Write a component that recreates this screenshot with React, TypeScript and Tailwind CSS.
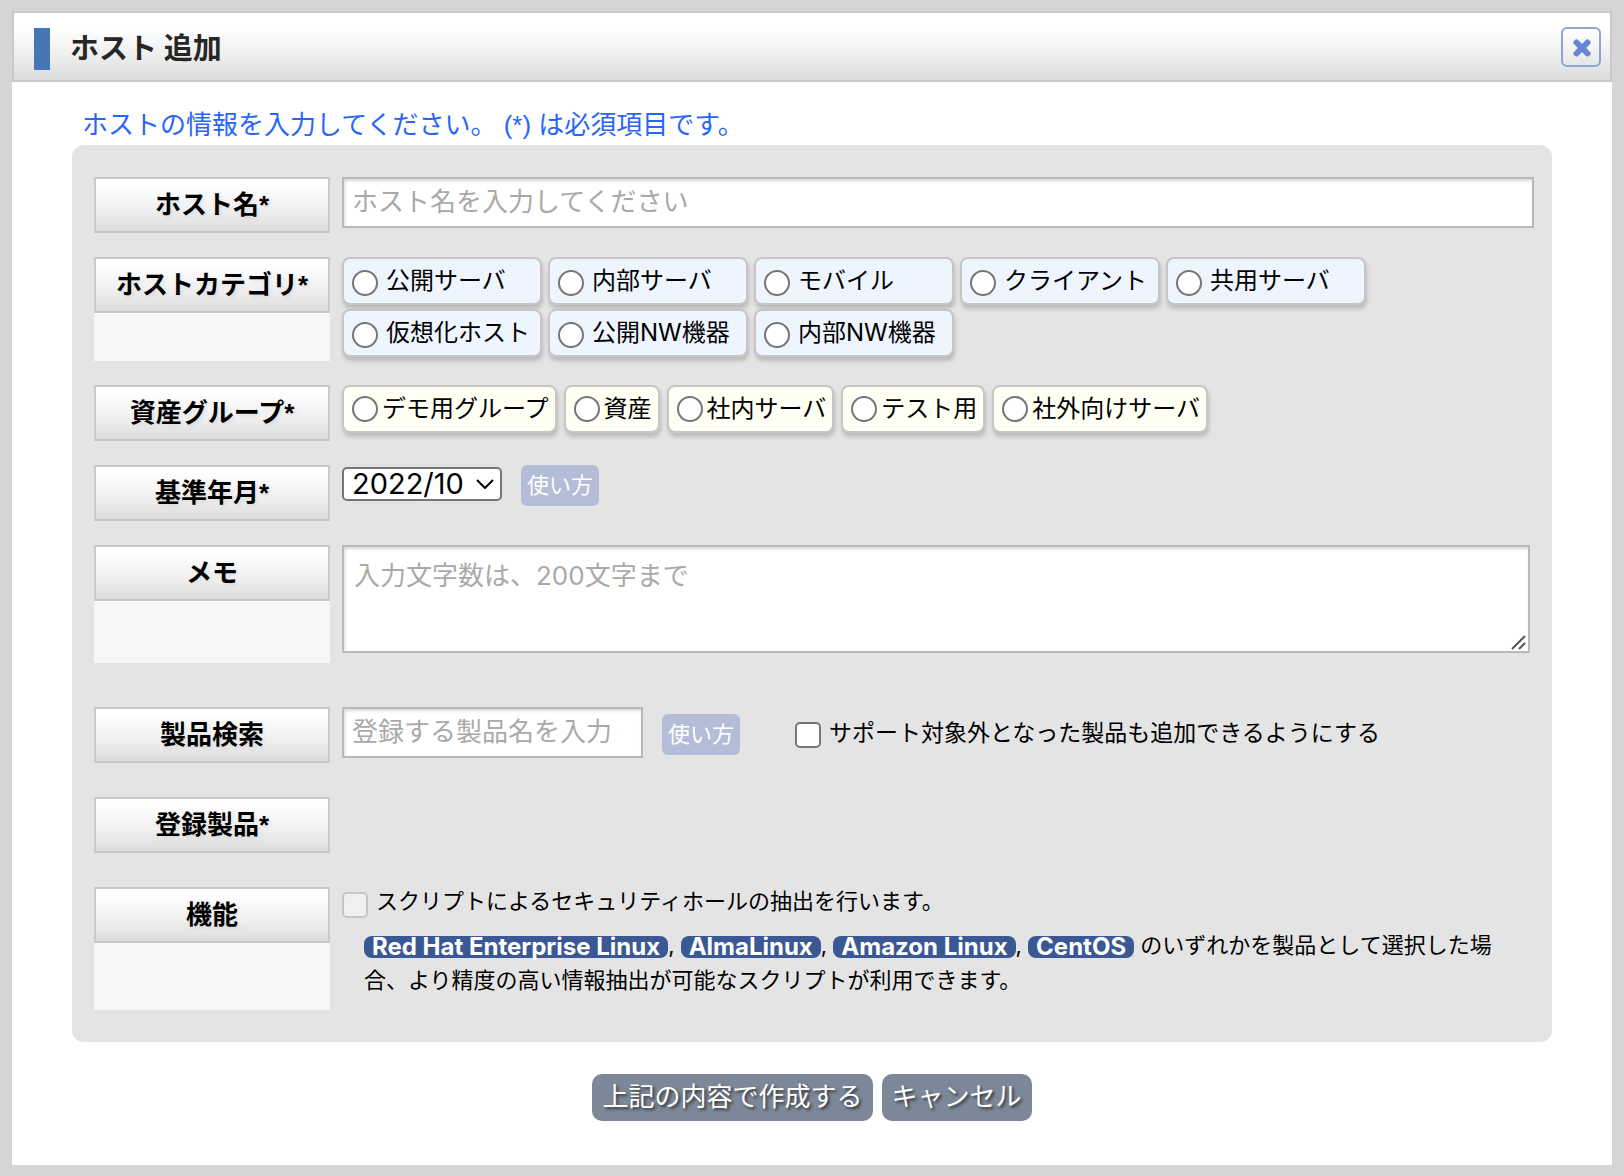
import { useState, type ReactNode } from "react";

const CATEGORIES = [
  "公開サーバ", "内部サーバ", "モバイル", "クライアント", "共用サーバ",
  "仮想化ホスト", "公開NW機器", "内部NW機器",
];

const GROUPS = ["デモ用グループ", "資産", "社内サーバ", "テスト用", "社外向けサーバ"];

const MONTHS = ["2022/10", "2022/09", "2022/08"];

const FIELD =
  "border-2 border-[#b9b9b9] bg-white text-[26px] placeholder:text-[#a9a9a9] placeholder:opacity-100 shadow-[inset_1px_2px_3px_rgba(0,0,0,0.15)] outline-none";

const RADIO =
  "size-[26px] shrink-0 appearance-none rounded-full border-2 border-[#767676] bg-white checked:border-[#3b5998] checked:bg-[radial-gradient(#3b5998_50%,white_55%)]";

const CHECKBOX =
  "size-[26px] shrink-0 appearance-none rounded-[5px] border-2 border-[#767676] bg-white checked:bg-[#3b5998] disabled:border-[#c6c6c6] disabled:bg-[#efefef]";

const CHIP =
  "flex h-12 items-center rounded-lg border-2 border-[#c6c6c6] text-[24px] leading-[32px] whitespace-nowrap shadow-[1px_4px_4px_rgba(0,0,0,0.18)]";

const ACTION =
  "h-[47px] rounded-[10px] bg-[#7c8797] px-[10px] pb-[2px] [text-shadow:2px_2px_3px_rgba(0,0,0,0.6)]";

type RowProps = {
  id: string;
  title: string;
  group?: boolean;
  className?: string;
  children?: ReactNode;
};

function Row({ id, title, group, className = "", children }: RowProps) {
  const box =
    "block h-14 border-2 border-[#c9c9c9] bg-linear-to-b from-white from-10% via-[#f0f0f0] via-60% to-[#dbdddc] text-center font-['Liberation_Sans','Noto_Sans_CJK_JP',sans-serif] text-[26px] leading-[52px] font-bold [text-shadow:2px_2px_4px_rgba(0,0,0,0.08)]";
  return (
    <div className={`grid grid-cols-[236px_minmax(0,1fr)] gap-x-3 ${className}`}>
      <div className="bg-[#f7f7f7]">
        {group
          ? <span id={`${id}-label`} className={box}>{title}</span>
          : <label htmlFor={id} className={box}>{title}</label>}
      </div>
      {children}
    </div>
  );
}

function HelpButton() {
  return (
    <button type="button" className="h-[41px] w-[78px] shrink-0 rounded-md bg-[#b3bdd7] pb-[2px] text-[22px] leading-[32px] text-white">
      使い方
    </button>
  );
}

function Badge({ children }: { children: ReactNode }) {
  return (
    <strong className="inline-block h-[22px] rounded-lg bg-[#3a5894] px-2 align-middle text-[24px] leading-[22px] font-bold text-white">
      {children}
    </strong>
  );
}

export default function App() {
  const [category, setCategory] = useState("");
  const [group, setGroup] = useState("");
  const [unsupported, setUnsupported] = useState(false);

  return (
    <div className="min-h-screen bg-[#d5d5d5] px-3 py-[11px] font-['Inter','Noto_Sans_CJK_JP',sans-serif] text-black">
      <main className="bg-white pb-11">
        <header className="flex h-[71px] items-center border-2 border-[#c9c9c9] bg-linear-to-b from-white from-25% via-[#efefef] via-60% to-[#dbdddc] pr-[9px] pl-5">
          <div className="flex gap-5 pt-1">
            <span className="h-[42px] w-4 bg-[#4677b5]" />
            <h1 className="text-[29px] leading-[42px] font-bold text-[#262626]">ホスト 追加</h1>
          </div>
          <button type="button" aria-label="閉じる" className="ml-auto flex size-10 items-center justify-center rounded-md border-2 border-[#8fa6cf] pt-[2px] pl-[2px]">
            <svg viewBox="0 0 20 20" className="size-5">
              <path d="M4.5 4.5 L15.5 15.5 M15.5 4.5 L4.5 15.5" stroke="#6688d2" strokeWidth="6" strokeLinecap="round" />
            </svg>
          </button>
        </header>

        <form className="px-[60px] pt-[23px]" onSubmit={e => e.preventDefault()}>
          <p className="pl-[10px] font-['Liberation_Sans','Noto_Sans_CJK_JP',sans-serif] text-[26px] leading-[40px] text-[#2a66f6]">
            ホストの情報を入力してください。 (*) は必須項目です。
          </p>

          <div className="rounded-xl bg-[#e4e4e4] py-8 pr-[18px] pl-[22px]">
            <Row id="host" title="ホスト名*">
              <input id="host" type="text" placeholder="ホスト名を入力してください" className={`h-[51px] w-full px-2 pb-[2px] ${FIELD}`} />
            </Row>

            <Row id="category" title="ホストカテゴリ*" group className="mt-6">
              <div role="radiogroup" aria-labelledby="category-label" className="flex flex-wrap gap-x-[6px] gap-y-1 pb-1">
                {CATEGORIES.map(c => (
                  <label key={c} className={`${CHIP} w-[200px] gap-2 bg-[#eff5ff] pl-2`}>
                    <input type="radio" name="category" className={`${RADIO} mt-1`} checked={category === c} onChange={() => setCategory(c)} />
                    {c}
                  </label>
                ))}
              </div>
            </Row>

            <Row id="group" title="資産グループ*" group className="mt-6">
              <div role="radiogroup" aria-labelledby="group-label" className="flex flex-wrap gap-[7px]">
                {GROUPS.map(g => (
                  <label key={g} className={`${CHIP} gap-1 bg-[#fffff3] pr-[6px] pl-2`}>
                    <input type="radio" name="group" className={RADIO} checked={group === g} onChange={() => setGroup(g)} />
                    {g}
                  </label>
                ))}
              </div>
            </Row>

            <Row id="month" title="基準年月*" className="mt-6">
              <div className="flex items-start gap-[19px]">
                <div className="relative mt-[2px]">
                  <select id="month" className="block h-[34px] w-[160px] appearance-none rounded-[5px] border-2 border-[#767676] bg-white pl-2 text-[29px] leading-[30px]">
                    {MONTHS.map(m => <option key={m}>{m}</option>)}
                  </select>
                  <svg viewBox="0 0 18 10" className="pointer-events-none absolute top-3 right-2 h-[10px] w-[18px]" fill="none">
                    <path d="M1 1 L9 9 L17 1" stroke="black" strokeWidth="2" />
                  </svg>
                </div>
                <HelpButton />
              </div>
            </Row>

            <Row id="memo" title="メモ" className="mt-6">
              <div className="pr-1 pb-[10px]">
                <div className="relative">
                  <textarea id="memo" placeholder="入力文字数は、200文字まで" className={`block h-[108px] w-full resize-y px-[10px] pt-[9px] leading-[40px] ${FIELD}`} />
                  {/* larger resize grip drawn over the native one */}
                  <svg viewBox="0 0 18 16" className="pointer-events-none absolute right-[2px] bottom-[2px] h-4 w-[18px] bg-white" fill="none" stroke="#555">
                    <path d="M2 14 L15 1 M9 14 L15 8" strokeWidth="2" />
                  </svg>
                </div>
              </div>
            </Row>

            <Row id="product" title="製品検索" className="mt-11">
              <div className="flex items-start">
                <input id="product" type="text" placeholder="登録する製品名を入力" className={`h-[51px] w-[301px] px-2 pb-[2px] ${FIELD}`} />
                <div className="mt-[7px] ml-[19px] flex items-center">
                  <HelpButton />
                  <label className="ml-[55px] flex items-center gap-2 text-[23px] leading-[32px]">
                    <input type="checkbox" className={CHECKBOX} checked={unsupported} onChange={e => setUnsupported(e.target.checked)} />
                    <span className="pb-1">サポート対象外となった製品も追加できるようにする</span>
                  </label>
                </div>
              </div>
            </Row>

            <Row id="registered" title="登録製品*" group className="mt-[34px]" />

            <Row id="feature" title="機能" group className="mt-[34px]">
              <div className="pb-3">
                <label className="flex h-7 items-center gap-2 text-[22px] leading-[28px]">
                  <input type="checkbox" disabled className={`${CHECKBOX} mt-2`} />
                  スクリプトによるセキュリティホールの抽出を行います。
                </label>
                <p className="mt-[13px] pr-6 pl-[22px] text-[22px] leading-[35px]">
                  <Badge>Red Hat Enterprise Linux</Badge>, <Badge>AlmaLinux</Badge>, <Badge>Amazon Linux</Badge>, <Badge>CentOS</Badge> のいずれかを製品として選択した場合、より精度の高い情報抽出が可能なスクリプトが利用できます。
                </p>
              </div>
            </Row>
          </div>

          <div className="mt-8 flex justify-center gap-[9px] text-[26px] leading-[40px] text-white">
            <button type="submit" className={ACTION}>上記の内容で作成する</button>
            <button type="button" className={ACTION}>キャンセル</button>
          </div>
        </form>
      </main>
    </div>
  );
}
